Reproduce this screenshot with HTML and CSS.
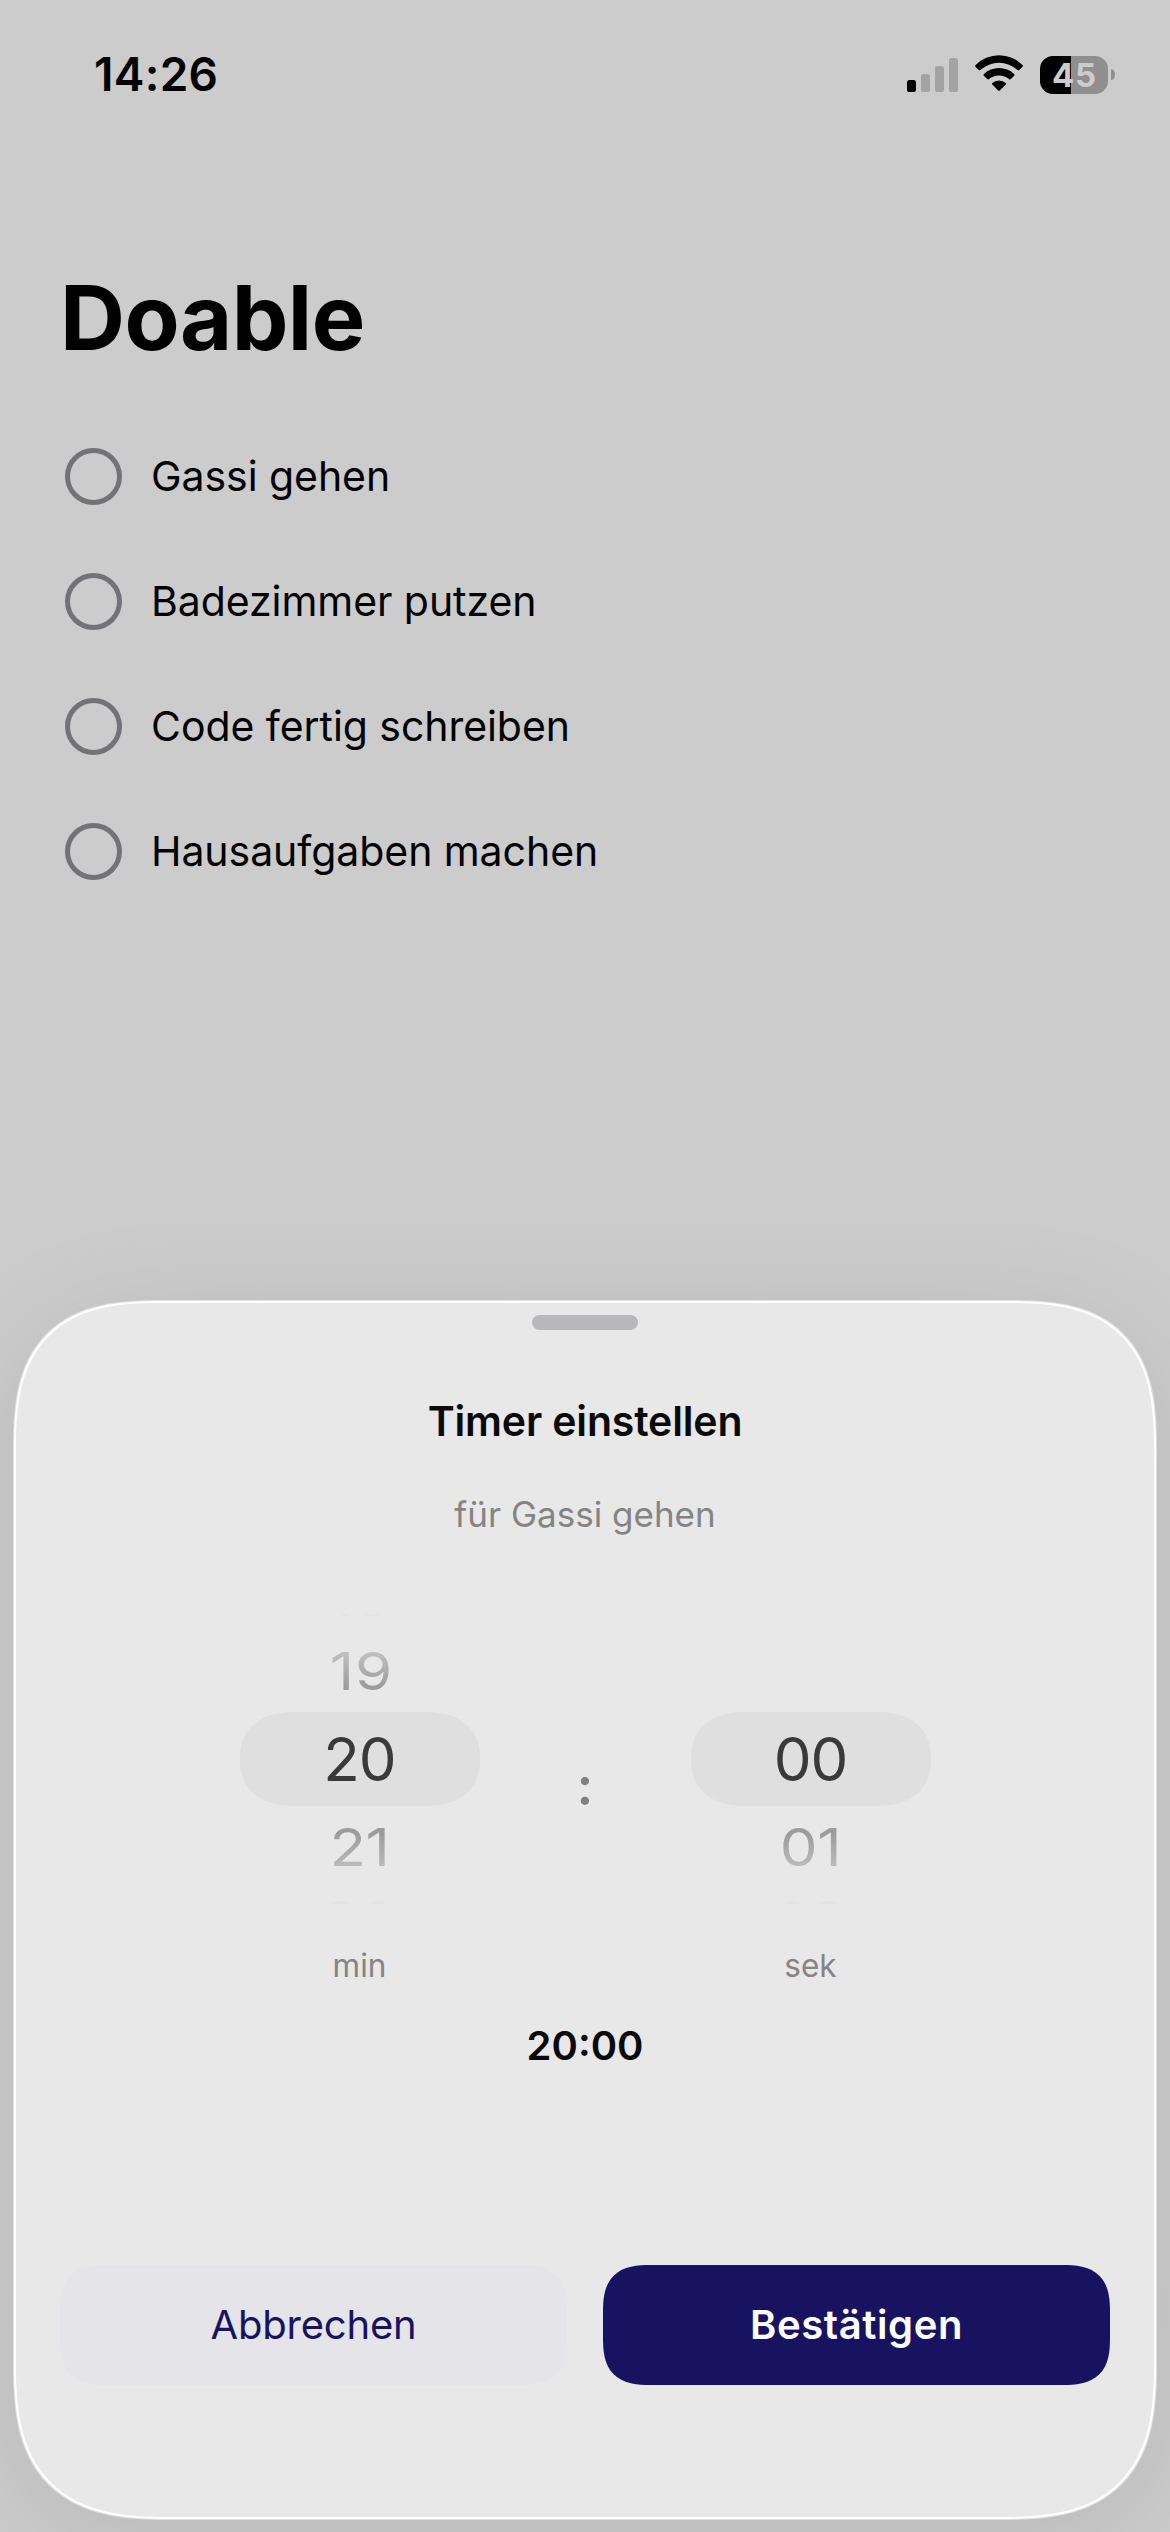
FILE: index.html
```html
<!DOCTYPE html>
<html lang="de">
<head>
<meta charset="utf-8">
<title>Doable</title>
<link rel="stylesheet" href="styles.css">
</head>
<body>
<div class="screen">
  <header class="status">
    <span class="time">14:26</span>
    <div class="status-icons">
      <svg class="signal" width="51" height="34" viewBox="0 0 51 34">
        <rect x="0" y="22" width="9" height="12" rx="2.6" fill="#000"/>
        <rect x="14" y="16" width="9" height="18" rx="2.6" fill="#a3a3a3"/>
        <rect x="28" y="8" width="9" height="26" rx="2.6" fill="#a3a3a3"/>
        <rect x="42" y="0" width="9" height="34" rx="2.6" fill="#a3a3a3"/>
      </svg>
      <svg class="wifi" width="48" height="36" viewBox="0 0 48 36">
        <path d="M.6 10A33 33 0 0 1 47.4 10Q48.3 10.8 47.5 11.7L44.3 15.1Q43.5 15.9 42.6 15.1A27.5 27.5 0 0 0 5.4 15.1Q4.5 15.9 3.7 15.1L.5 11.7Q-.3 10.8 .6 10Z"/>
        <path d="M8.9 19A22.2 22.2 0 0 1 39.1 19Q40 19.9 39.2 20.7L35.9 24.1Q35 25 34.1 24.2A15.5 15.5 0 0 0 13.9 24.2Q13 25 12.1 24.1L8.8 20.7Q8 19.9 8.9 19Z"/>
        <path d="M17.3 28A10.2 10.2 0 0 1 30.7 28Q31.5 28.8 30.7 29.6L24.8 35.5Q24 36.2 23.2 35.5L17.3 29.6Q16.5 28.8 17.3 28Z"/>
      </svg>
      <div class="battery">
        <div class="battery-body">45</div>
        <div class="battery-cap"></div>
      </div>
    </div>
  </header>

  <main class="list-page">
    <h1>Doable</h1>
    <ul class="tasks">
      <li><span class="check"></span>Gassi gehen</li>
      <li><span class="check"></span>Badezimmer putzen</li>
      <li><span class="check"></span>Code fertig schreiben</li>
      <li><span class="check"></span>Hausaufgaben machen</li>
    </ul>
  </main>

  <section class="sheet">
    <div class="handle"></div>
    <h2>Timer einstellen</h2>
    <p class="subtitle">für Gassi gehen</p>

    <div class="pickers">
      <div class="picker">
        <div class="ghost ghost-top"><span>18</span></div>
        <div class="item above"><span>19</span></div>
        <div class="selected">20</div>
        <div class="item below"><span>21</span></div>
        <div class="ghost ghost-bottom"><span>22</span></div>
        <div class="unit">min</div>
      </div>
      <div class="colon">:</div>
      <div class="picker">
        <div class="ghost ghost-top"></div>
        <div class="item above"></div>
        <div class="selected">00</div>
        <div class="item below"><span>01</span></div>
        <div class="ghost ghost-bottom"><span>02</span></div>
        <div class="unit">sek</div>
      </div>
    </div>

    <div class="total">20:00</div>

    <div class="actions">
      <button class="cancel" type="button">Abbrechen</button>
      <button class="confirm" type="button">Bestätigen</button>
    </div>
  </section>
</div>
</body>
</html>
```
FILE: styles.css
```css
* {
  box-sizing: border-box;
}

body,
h1,
h2,
p,
ul {
  margin: 0;
  padding: 0;
}

body {
  background: #ccc;
  color: #000;
  font-family: Inter, "Liberation Sans", sans-serif;
}

.screen {
  position: relative;
  width: 1170px;
  height: 2532px;
  overflow: hidden;
  background: #ccc;
}

/* Status bar */
.status {
  display: flex;
  align-items: center;
  justify-content: space-between;
  height: 149px;
  padding: 0 55px 0 94px;
}

.time {
  padding-bottom: 2px;
  font-size: 46px;
  font-weight: 600;
  letter-spacing: 0.3px;
}

.status-icons {
  display: flex;
  align-items: center;
}

.wifi {
  margin: -3px 17px 0;
}

.battery {
  display: flex;
  align-items: center;
  gap: 3px;
}

.battery-body {
  width: 68px;
  height: 38px;
  padding-left: 1px;
  border-radius: 13px;
  background: linear-gradient(90deg, #000 31px, #8f8f8f 31px);
  color: #ccc;
  font-size: 33px;
  font-weight: 650;
  line-height: 38px;
  letter-spacing: 0.8px;
  text-align: center;
}

.battery-cap {
  width: 4px;
  height: 11px;
  border-radius: 0 4px 4px 0 / 0 5.5px 5.5px 0;
  background: #8f8f8f;
}

/* Task list */
.list-page {
  padding-top: 115px;
}

h1 {
  padding-left: 60px;
  font-size: 90px;
  font-weight: 700;
  line-height: 108px;
  letter-spacing: -0.55px;
}

.tasks {
  margin-top: 41px;
  padding-left: 65px;
  list-style: none;
}

.tasks li {
  display: flex;
  align-items: center;
  gap: 29px;
  height: 125px;
  font-size: 41px;
  letter-spacing: -0.06px;
}

.check {
  width: 57px;
  height: 57px;
  margin-top: 2px;
  border: 5px solid #737377;
  border-radius: 50%;
}

/* Bottom sheet */
.sheet {
  position: absolute;
  top: 1301px;
  left: 14px;
  display: flex;
  flex-direction: column;
  align-items: center;
  width: 1142px;
  height: 1218px;
  border: 2px solid #fff;
  border-radius: 150px 150px 158px 158px;
  corner-shape: superellipse(1.46);
  background: #e8e8e8;
  box-shadow: 0 0 0 1px #e2e2e2, 0 20px 115px rgba(0, 0, 0, 0.1);
}

.handle {
  width: 106px;
  height: 15px;
  margin-top: 12px;
  border-radius: 7.5px;
  background: #b8b8ba;
}

h2 {
  margin-top: 66px;
  color: #0a0a0a;
  font-size: 41px;
  font-weight: 600;
  line-height: 50px;
  letter-spacing: -0.16px;
}

.subtitle {
  margin-top: 47px;
  color: #848484;
  font-size: 35px;
  line-height: 42px;
}

/* Wheel pickers */
.pickers {
  display: flex;
  margin-top: 79px;
}

.picker {
  display: flex;
  flex-direction: column;
  width: 240px;
  text-align: center;
  font-size: 60px;
  line-height: 60px;
}

.ghost {
  display: flex;
  justify-content: center;
  height: 4px;
  overflow: hidden;
  color: #e3e3e3;
}

.ghost-top {
  align-items: flex-end;
}

.ghost-top span {
  margin-bottom: -6px;
}

.ghost-bottom {
  align-items: flex-start;
}

.ghost-bottom span {
  margin-top: -7px;
}

.item {
  display: flex;
  align-items: center;
  justify-content: center;
  height: 94px;
}

.item span {
  background-clip: text;
  color: transparent;
}

.above span {
  background-image: linear-gradient(#c0c0c0 15%, #9c9c9c 80%);
  letter-spacing: 1px;
  transform: translate(2px, 6px) scaleY(0.87);
}

.below span {
  background-image: linear-gradient(#9c9c9c 25%, #bcbcbc 90%);
  letter-spacing: -0.5px;
  transform: translateY(-6px) scaleY(0.87);
}

.selected {
  height: 94px;
  border-radius: 56px / 47px;
  corner-shape: superellipse(1.25);
  background: #dfdfdf;
  color: #3a3a3a;
  line-height: 94px;
  letter-spacing: -1px;
}

.unit {
  margin-top: 42px;
  color: #848484;
  font-size: 31.5px;
  line-height: 40px;
}

.colon {
  display: flex;
  align-items: center;
  justify-content: center;
  width: 211px;
  padding-bottom: 29px;
  color: #808080;
  font-size: 53px;
  font-weight: 600;
}

.total {
  margin-top: 36px;
  color: #0a0a0a;
  font-size: 40px;
  font-weight: 600;
  line-height: 48px;
}

/* Buttons */
.actions {
  display: flex;
  gap: 36px;
  margin-top: 195px;
}

.actions button {
  width: 507px;
  height: 120px;
  padding: 0 0 2px;
  border: 0;
  border-radius: 48px;
  corner-shape: superellipse(1.46);
  font-family: inherit;
  font-size: 40px;
}

.cancel {
  background: #e4e4e9;
  color: #181360;
  font-weight: 430;
  letter-spacing: -0.2px;
}

.confirm {
  background: #181360;
  color: #fff;
  font-weight: 600;
  letter-spacing: 0.6px;
}
```
